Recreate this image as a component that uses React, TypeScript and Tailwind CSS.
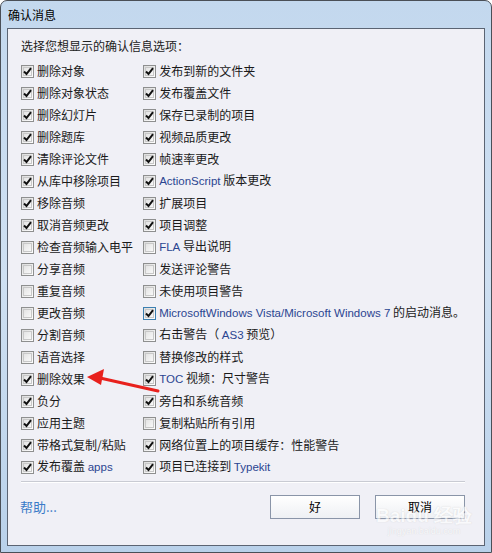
import React from 'react';

type Item = { label: string; checked: boolean; focus?: boolean };

const leftItems: Item[] = [
  { label: '删除对象', checked: true },
  { label: '删除对象状态', checked: true },
  { label: '删除幻灯片', checked: true },
  { label: '删除题库', checked: true },
  { label: '清除评论文件', checked: true },
  { label: '从库中移除项目', checked: true },
  { label: '移除音频', checked: true },
  { label: '取消音频更改', checked: true },
  { label: '检查音频输入电平', checked: false },
  { label: '分享音频', checked: false },
  { label: '重复音频', checked: false },
  { label: '更改音频', checked: false },
  { label: '分割音频', checked: false },
  { label: '语音选择', checked: false },
  { label: '删除效果', checked: true },
  { label: '负分', checked: true },
  { label: '应用主题', checked: true },
  { label: '带格式复制/粘贴', checked: true },
  { label: '发布覆盖 apps', checked: true },
];

const rightItems: Item[] = [
  { label: '发布到新的文件夹', checked: true },
  { label: '发布覆盖文件', checked: true },
  { label: '保存已录制的项目', checked: true },
  { label: '视频品质更改', checked: true },
  { label: '帧速率更改', checked: true },
  { label: 'ActionScript 版本更改', checked: true },
  { label: '扩展项目', checked: true },
  { label: '项目调整', checked: true },
  { label: 'FLA 导出说明', checked: false },
  { label: '发送评论警告', checked: false },
  { label: '未使用项目警告', checked: false },
  { label: 'MicrosoftWindows Vista/Microsoft Windows 7 的启动消息。', checked: true, focus: true },
  { label: '右击警告（ AS3 预览）', checked: false },
  { label: '替换修改的样式', checked: false },
  { label: 'TOC 视频：尺寸警告', checked: true },
  { label: '旁白和系统音频', checked: true },
  { label: '复制粘贴所有引用', checked: false },
  { label: '网络位置上的项目缓存：性能警告', checked: true },
  { label: '项目已连接到 Typekit', checked: true },
];

// latin runs are drawn in the dark blue of the original dialog
const Label: React.FC<{ text: string }> = ({ text }) => {
  const parts = text.split(/([A-Za-z][A-Za-z0-9 \/.]*[A-Za-z0-9])/);
  return (
    <span className="whitespace-nowrap">
      {parts.map((p, i) =>
        i % 2 === 1 ? (
          <span key={i} className="text-[#2b4591] font-['Liberation_Sans',sans-serif] text-[11.5px]">
            {p}
          </span>
        ) : (
          <span key={i}>{p}</span>
        )
      )}
    </span>
  );
};

const Box: React.FC<{ checked: boolean; focus?: boolean }> = ({ checked, focus }) => (
  <span
    className={`relative flex h-[13px] w-[13px] shrink-0 items-center justify-center border bg-gradient-to-br from-[#dcdcdc] to-[#ffffff] ${
      focus ? 'border-[#3c7fb1]' : 'border-[#8e8f8f]'
    }`}
  >
    <span className="absolute inset-[1px] border border-[#c8c8c8] bg-gradient-to-br from-[#e4e4e4] to-[#f8f8f8]" />
    {checked && (
      <svg className="relative" width="9" height="9" viewBox="0 0 9 9">
        <path d="M1 4.5 L3.5 7 L8 1.2" fill="none" stroke="#111" strokeWidth="2" />
      </svg>
    )}
  </span>
);

const Row: React.FC<{ item: Item }> = ({ item }) => (
  <div className="flex h-[22px] items-center gap-[3px]">
    <Box checked={item.checked} focus={item.focus} />
    <Label text={item.label} />
  </div>
);

export default function App() {
  return (
    <div className="relative h-[553px] w-[492px] overflow-hidden font-['Noto_Sans_CJK_SC',sans-serif] text-[12px] text-[#1a1a1a]">
      <div className="flex h-full w-full flex-col rounded-t-[7px] border border-[#4a4f57] bg-gradient-to-b from-[#c3d8ee] via-[#cfe0f2] to-[#b9d1ea] px-[6px] pb-[6px]">
        <div className="flex h-[27px] items-center pl-[1px] text-[12px] text-[#000]">确认消息</div>
        <div className="flex flex-1 flex-col border border-[#5b6473] bg-[#f0f0f6] pl-[13px] pr-[19px] pt-[7px]">
          <div className="h-[20px] leading-[20px] text-[#222]">选择您想显示的确认信息选项：</div>
          <div className="mt-[4px] flex">
            <div className="flex w-[124px] flex-col">
              {leftItems.map((it, i) => (
                <Row key={i} item={it} />
              ))}
            </div>
            <div className="flex flex-col">
              {rightItems.map((it, i) => (
                <Row key={i} item={it} />
              ))}
            </div>
          </div>
          <div className="mt-[3px] h-[2px] border-t border-b border-t-[#c9cbd3] border-b-[#ffffff]" />
          <div className="mt-[12px] flex items-center">
            <span className="ml-[-1px] text-[13px] text-[#3a7bc8]">帮助...</span>
            <div className="ml-auto flex gap-[15px]">
              <button className="h-[24px] w-[90px] border border-[#8a95a8] bg-gradient-to-b from-[#ffffff] to-[#eef0f4] text-[12px] text-[#000]">
                好
              </button>
              <button className="h-[24px] w-[90px] border border-[#8a95a8] bg-gradient-to-b from-[#ffffff] to-[#eef0f4] text-[12px] text-[#000]">
                取消
              </button>
            </div>
          </div>
        </div>
      </div>

      {/* watermark */}
      <div className="pointer-events-none absolute left-[376px] top-[506px] flex flex-col items-center font-['Liberation_Sans',sans-serif] text-white opacity-60">
        <span className="text-[19px] font-bold leading-[19px] [text-shadow:0_0_1px_#bbb]">Baidu 经验</span>
        <span className="text-[9px] leading-[12px] [text-shadow:0_0_1px_#bbb]">jingyan.baidu.com</span>
      </div>

      {/* red arrow */}
      <svg className="pointer-events-none absolute left-0 top-0" width="492" height="553">
        <path d="M158 391 L100 378" stroke="#e8211d" strokeWidth="3" strokeLinecap="round" />
        <path d="M87 377 L104 369 L101 385 Z" fill="#e8211d" />
      </svg>
    </div>
  );
}
